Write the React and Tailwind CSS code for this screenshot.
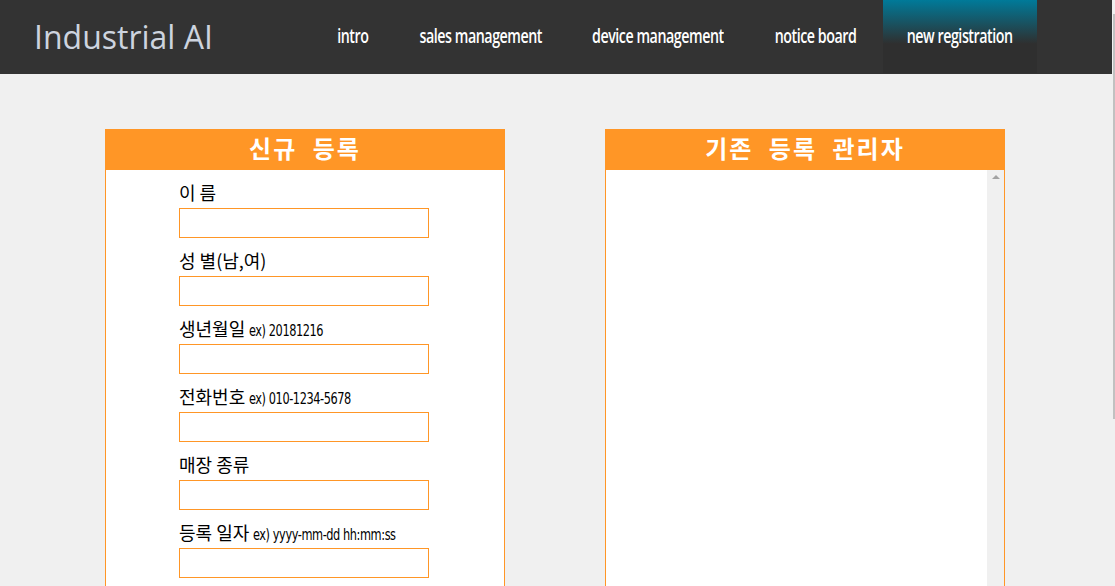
import React from 'react';

const fields = [
  { label: '이 름' },
  { label: '성 별(남,여)' },
  { label: '생년월일', hint: 'ex) 20181216' },
  { label: '전화번호', hint: 'ex) 010-1234-5678' },
  { label: '매장 종류' },
  { label: '등록 일자', hint: 'ex) yyyy-mm-dd hh:mm:ss' },
];

const narrow = { fontFamily: '"DejaVu Sans", sans-serif', fontStretch: 'condensed' };
const navFont = { fontFamily: '"Open Sans", sans-serif' };

function NavItem({ w, active, children }) {
  return (
    <div
      className={`${w} flex items-center justify-center ${active ? 'bg-[linear-gradient(to_bottom,#007a99_0%,#2f2f2f_60%,#2f2f2f_100%)]' : ''}`}
    >
      <span className="inline-block whitespace-nowrap scale-x-[0.75]">{children}</span>
    </div>
  );
}

function Panel({ title, children }) {
  return (
    <div className="w-[400px] h-[460px] shrink-0 border border-[#ff9626] bg-white flex flex-col">
      <div className="h-10 shrink-0 bg-[#ff9626] flex items-center justify-center pb-[5px] text-white text-[24px] font-bold tracking-[2px] [word-spacing:8px]">
        {title}
      </div>
      {children}
    </div>
  );
}

export default function App() {
  return (
    <div className="h-[586px] overflow-hidden bg-[#f0f0f0] flex font-['Noto_Sans_CJK_KR',sans-serif]">
      <div className="w-[1112px] flex flex-col">
        {/* header */}
        <div className="h-[74px] shrink-0 bg-[#333333] flex items-stretch">
          <div className="pl-[34px] w-[311px] flex items-center text-[32px] text-[#cdd4df] font-['Open_Sans',sans-serif] pb-[1px]">
            Industrial AI
          </div>
          <div className="flex items-stretch text-white text-[19px] font-semibold tracking-[-0.6px] pb-[1px]" style={navFont}>
            <NavItem w="w-[84px]">intro</NavItem>
            <NavItem w="w-[172px]">sales management</NavItem>
            <NavItem w="w-[182px]">device management</NavItem>
            <NavItem w="w-[134px]">notice board</NavItem>
            <NavItem w="w-[154px]" active>new registration</NavItem>
          </div>
        </div>

        {/* content */}
        <div className="flex gap-[100px] pl-[105px] pt-[55px]">
          <Panel title="신규 등록">
            <div className="w-[250px] mx-[73px] pt-2">
              {fields.map((f) => (
                <div key={f.label} className="mb-2">
                  <div className="h-7 leading-7 text-[18px] text-black whitespace-nowrap pb-[1px]">
                    {f.label}
                    {f.hint && (
                      <span className="inline-block text-[15px] ml-1 tracking-[-0.5px] origin-left scale-x-[0.84]" style={narrow}>
                        {f.hint}
                      </span>
                    )}
                  </div>
                  <input className="mt-0.5 block w-[250px] h-[30px] border border-[#ff9626] bg-white outline-none" />
                </div>
              ))}
            </div>
          </Panel>
          <Panel title="기존 등록 관리자">
            <div className="flex-1 flex justify-end">
              <div className="w-[17px] bg-[#f0f0f0] flex justify-center pt-[5px]">
                <div className="w-0 h-0 border-l-[4px] border-r-[4px] border-b-[4px] border-l-transparent border-r-transparent border-b-[#a3a3a3]" />
              </div>
            </div>
          </Panel>
        </div>
      </div>
      <div className="w-[3px] flex flex-col">
        <div className="h-[14px]" />
        <div className="h-[405px] w-[2px] ml-[1px] bg-[#c1c1c1]" />
      </div>
    </div>
  );
}
